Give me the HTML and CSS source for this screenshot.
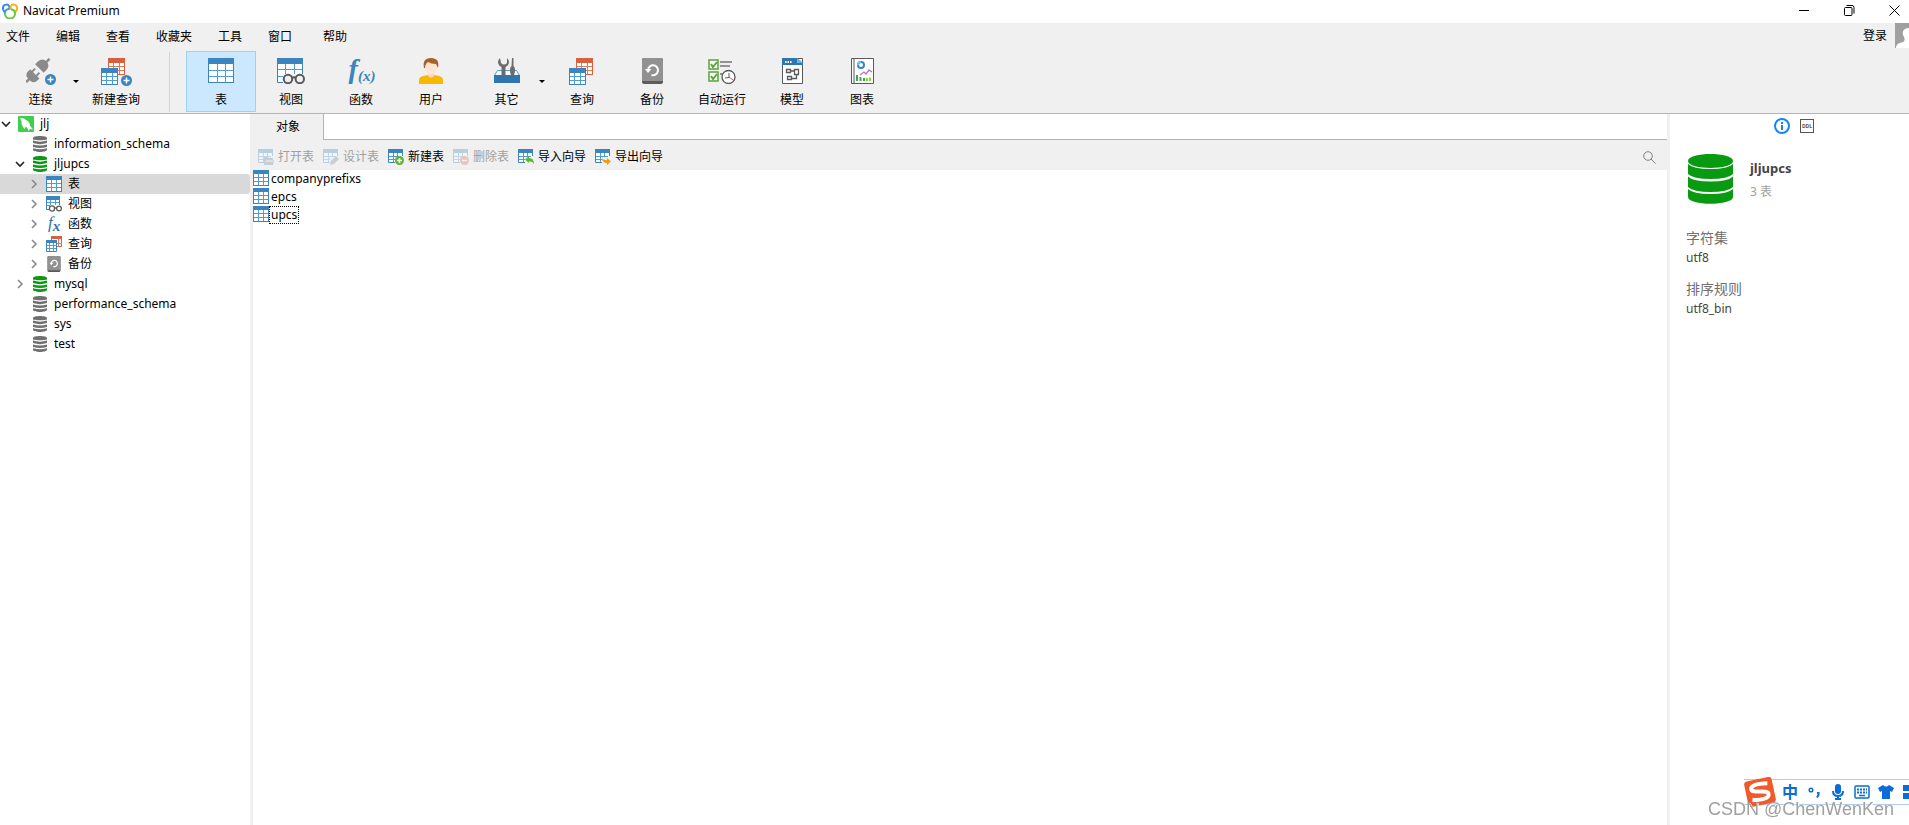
FILE: index.html
```html
<!DOCTYPE html>
<html lang="zh-CN">
<head>
    <meta charset="UTF-8">
    <meta name="viewport" content="width=device-width, initial-scale=1.0">
    <title>Navicat Premium</title>
    <link rel="stylesheet" href="styles.css">
</head>
<body>
    <!-- shared icons -->
    <svg class="defs" aria-hidden="true">
        <symbol id="grid16" viewBox="0 0 16 16">
            <rect x=".5" y=".5" width="15" height="15" fill="#fff" stroke="#3a84c0"/>
            <path d="M0 0h16v4H0z" fill="#3a84c0"/>
            <path d="M5.500 4v11M10.500 4v11M1 7.500h14M1 11.500h14" stroke="#4e9cda"/>
        </symbol>
        <symbol id="grid26" viewBox="0 0 26 26">
            <rect x=".5" y=".5" width="25" height="24" fill="#fff" stroke="#3a84c0"/>
            <path d="M0 0h26v6H0z" fill="#3a84c0"/>
            <path d="M9.500 6v18M17.500 6v18M1 12.500h24M1 18.500h24" stroke="#4e9cda"/>
        </symbol>
        <symbol id="query26" viewBox="0 0 26 27">
            <rect x="7.500" y=".5" width="16" height="16" fill="#fff" stroke="#d9603f"/>
            <path d="M7 0h17v5H7z" fill="#d9603f"/>
            <path d="M12.500 5v11M18.500 5v11M8 8.500h15M8 12.500h15" stroke="#e07a5e"/>
            <rect x=".5" y="10.500" width="16" height="16" fill="#fff" stroke="#3a84c0"/>
            <path d="M0 10h17v5H0z" fill="#3a84c0"/>
            <path d="M5.500 15v11M11.500 15v11M1 18.500h15M1 22.500h15" stroke="#4e9cda"/>
        </symbol>
        <symbol id="view26" viewBox="0 0 28 26">
            <path d="M.5 0v24.500H6M25.500 0v16" fill="#fff" stroke="#3a84c0"/>
            <path d="M1 6h24v11H7v7H1z" fill="#fff"/>
            <path d="M0 0h26v6H0z" fill="#3a84c0"/>
            <path d="M8.500 6v10M17.500 6v10M1 11.500h24M1 18.500h5" stroke="#4e9cda"/>
            <g fill="#f0f0f0" stroke="#595959" stroke-width="2"><circle cx="11" cy="21" r="4.200"/><circle cx="22.800" cy="21" r="4.200"/><path d="M15 20q2-1.500 4 0" fill="none"/></g>
        </symbol>
        <symbol id="backup" viewBox="0 0 21 26">
            <rect width="21" height="26" rx="2" fill="#5c5c5c"/>
            <path d="M2 0h17a2 2 0 0 1 2 2v21H0V2a2 2 0 0 1 2-2z" fill="#919191"/>
            <path d="M6 12a5 5 0 1 1 3.500 5" fill="none" stroke="#fff" stroke-width="2"/>
            <path d="M3 11h6.500L6 15z" fill="#fff"/>
        </symbol>
        <symbol id="db" viewBox="0 0 14 16">
            <path d="M0 2.200C0-.6 14-.6 14 2.200v1C14 4.500 0 4.500 0 3.200zM0 4.600q7 2.200 14 0v2.500Q7 9.300 0 7.100zM0 8.400q7 2.200 14 0v2.500q-7 2.200-14 0zM0 12.200q7 2.200 14 0v1.600c0 2.900-14 2.900-14 0z" fill="currentColor"/>
        </symbol>
        <symbol id="plus" viewBox="0 0 11 11">
            <circle cx="5.500" cy="5.500" r="5.500" fill="#3a84c0"/>
            <path d="M5.500 2.500v6M2.500 5.500h6" stroke="#fff" stroke-width="1.500"/>
        </symbol>
        <symbol id="action" viewBox="0 0 16 16">
            <path d="M.5 1v12.500H7M14.500 1v6" fill="none" stroke="#3a84c0"/>
            <path d="M1 4h13v4H7v5H1z" fill="#fff"/>
            <path d="M0 0h15v4H0z" fill="#3a84c0"/>
            <path d="M5.500 4v9M9.500 4v4M1 7.500h12M1 10.500h6" stroke="#4e9cda" fill="none"/>
        </symbol>
        <symbol id="right" viewBox="0 0 12 12"><path d="M4 2l4 4-4 4" fill="none" stroke="#8a8a8a" stroke-width="1.600"/></symbol>
        <symbol id="down" viewBox="0 0 12 12"><path d="M2 4l4 4 4-4" fill="none" stroke="#222" stroke-width="1.600"/></symbol>
    </svg>

    <header class="titlebar">
        <svg class="logo" viewBox="0 0 16 16" fill="none" stroke-width="2">
            <path d="M3.500 9C0 8 0 2 4 1.500 7 1 8 4 7 6.500" stroke="#4285f4"/>
            <path d="M12.500 9C16 8 16 2 12 1.500 9 1 8 4 9 6.500" stroke="#fbb416"/>
            <path d="M7 6C4 6 2.500 8.500 3 11" stroke="#2fa9c4"/>
            <path d="M3 10.500C3 17 13 17 13 10.500 13 8 11.500 6.500 9 6.500" stroke="#6cc644"/>
        </svg>
        <h1 class="title">Navicat Premium</h1>
        <div class="window-buttons">
            <button aria-label="最小化"><svg viewBox="0 0 11 11"><path d="M0 5.500h10" stroke="#000"/></svg></button>
            <button aria-label="还原"><svg viewBox="0 0 11 11" fill="none" stroke="#000"><rect x=".5" y="2.500" width="7.500" height="8" rx="1"/><path d="M2.500.5H8q2 0 2 2v6"/></svg></button>
            <button aria-label="关闭"><svg viewBox="0 0 11 11"><path d="M.5.5l10 10M10.500.5l-10 10" stroke="#000"/></svg></button>
        </div>
    </header>

    <div class="menubar">
        <nav class="menu">
            <div class="menu-group">
                <button>文件</button>
                <button>编辑</button>
                <button>查看</button>
                <button>收藏夹</button>
                <button>工具</button>
                <button>窗口</button>
            </div>
            <button>帮助</button>
        </nav>
        <button class="login">登录</button>
        <svg class="avatar" viewBox="0 0 14 25"><path d="M0 0h14v25H0z" fill="#a0a0a0"/><path d="M14 5c-5 0-7 3-6 7l1 2c1 2 1 4-1 5-5 1-7 3-7 6h13z" fill="#fff"/></svg>
    </div>

    <div class="toolbar">
        <div class="split">
            <button class="tool">
                <svg width="30" height="27" viewBox="0 0 30 27">
                    <g transform="rotate(-45 12 12)" fill="#8a8a8a"><path d="M-5 11h5v2.500h-5zM-1 10q0-3 4-4h4v2h4v2H7v4h4v2H7v3H3q-4-1-4-4zM14 6q10-1 10 6t-10 6zM23 11h5v2.500h-5z"/></g>
                    <use href="#plus" x="19" y="16" width="11" height="11"/>
                </svg>
                <span>连接</span>
            </button>
            <button class="arrow" aria-label="更多连接"></button>
        </div>
        <button class="tool">
            <svg width="31" height="28" viewBox="0 0 31 28"><use href="#query26" width="26" height="27"/><use href="#plus" x="20" y="17" width="11" height="11"/></svg>
            <span>新建查询</span>
        </button>
        <div class="separator"></div>
        <button class="tool active"><svg width="26" height="26"><use href="#grid26"/></svg><span>表</span></button>
        <button class="tool"><svg width="28" height="26"><use href="#view26"/></svg><span>视图</span></button>
        <button class="tool"><span class="fx fx-large">f<sub>(x)</sub></span><span>函数</span></button>
        <button class="tool">
            <svg width="24" height="26" viewBox="0 0 24 26">
                <path d="M0 26v-4q0-3 4-4l5-1h6l5 1q4 1 4 4v4z" fill="#f8b800"/>
                <path d="M9 13h6v5q-3 3-6 0z" fill="#fbd9c4"/>
                <path d="M6 4h12v6q-1 6-6 6t-6-6z" fill="#fde4d3"/>
                <path d="M5 10Q3 0 12 0t7 10l-2-4q-5 0-8-2-3 2-3 6z" fill="#a9602a"/>
            </svg>
            <span>用户</span>
        </button>
        <div class="split">
            <button class="tool">
                <svg width="26" height="26" viewBox="0 0 26 26">
                    <path d="M3.500 12.500h19l3 5H.5z" fill="#fff" stroke="#4e9cda"/>
                    <path d="M6 0Q3 3 4.500 6 5 8 7.500 9v8h4V9Q14 8 14.500 6 16 3 13 0v5q-3 3-6 0zM18 0h1.500v8q1.500 1 1.500 4t-1 5h-3q-1-2-1-5t1.500-4z" fill="#6c6c6c"/>
                    <path d="M0 17h26v8H0z" fill="#2f75ae"/>
                </svg>
                <span>其它</span>
            </button>
            <button class="arrow" aria-label="更多其它"></button>
        </div>
        <button class="tool"><svg width="26" height="27"><use href="#query26"/></svg><span>查询</span></button>
        <button class="tool"><svg width="21" height="26"><use href="#backup"/></svg><span>备份</span></button>
        <button class="tool">
            <svg width="28" height="26" viewBox="0 0 28 26" fill="none">
                <path d="M1 2h9v9H1zM1 14h9v9H1z" fill="#fff" stroke="#5ba33c" stroke-width="1.500"/>
                <path d="M3 6l2 3 4-5M3 18l2 3 4-5" stroke="#5ba33c" stroke-width="2"/>
                <path d="M12 4h12M12 8h10M12 16h3" stroke="#939393" stroke-width="2"/>
                <circle cx="20.500" cy="19" r="6.500" fill="#fff" stroke="#595959" stroke-width="1.300"/>
                <path d="M21 15v4.500L17 20" stroke="#595959"/><path d="M21 19l4 3" stroke="#d9603f"/>
            </svg>
            <span>自动运行</span>
        </button>
        <button class="tool">
            <svg width="21" height="26" viewBox="0 0 21 26" fill="none">
                <path d="M.5.5h20v25H.5z" fill="#fff" stroke="#595959"/>
                <path d="M0 0h15l6 5v2H0z" fill="#2f75ae"/><path d="M15 0l6 5h-6z" fill="#63b4f3"/>
                <path d="M3 4h1.500M5.500 4H7M8 4h1.500" stroke="#fff" stroke-width="2"/>
                <path d="M4.500 11.500h4v3h-4zM12.500 11.500h4v5h-4zM5.500 18.500h4v3h-4zM8.500 13h4M9.500 20.500h5v-4" stroke="#595959" stroke-width="1.300"/>
            </svg>
            <span>模型</span>
        </button>
        <button class="tool">
            <svg width="23" height="26" viewBox="0 0 23 26" fill="none">
                <path d="M.5.5h22v25H.5z" fill="#fff" stroke="#595959"/><path d="M3 1v24" stroke="#595959"/>
                <circle cx="10" cy="7" r="3" stroke="#3a84c0" stroke-width="2"/><path d="M10 4a3 3 0 0 0-3 3" stroke="#63c4f3" stroke-width="2"/>
                <path d="M9 17l4-3 2 2 3-4 3 2" stroke="#b86fc9" stroke-width="1.300"/>
                <path d="M6 17v6M9.500 19v4M13 20v3" stroke="#35ab4c" stroke-width="2"/><path d="M16 20v3M19 19.500v3.500" stroke="#8fd12a" stroke-width="2"/>
            </svg>
            <span>图表</span>
        </button>
    </div>

    <div class="workspace">
        <ul class="tree">
            <li><svg class="chevron"><use href="#down"/></svg><svg class="icon" viewBox="0 0 16 16"><rect width="16" height="16" rx="1" fill="#3fd04b"/><path d="M2 2q4-.5 6 2 4 2 4 5.500l3 4-3-.5-1.500 2q-.5-3-2.500-4.500L6.500 13Q3 9 3.500 5z" fill="#fff"/></svg>jlj</li>
            <li class="level1"><span class="chevron"></span><svg class="icon off"><use href="#db"/></svg>information_schema</li>
            <li class="level1"><svg class="chevron"><use href="#down"/></svg><svg class="icon on"><use href="#db"/></svg>jljupcs</li>
            <li class="level2 selected"><svg class="chevron"><use href="#right"/></svg><svg class="icon"><use href="#grid16"/></svg>表</li>
            <li class="level2"><svg class="chevron"><use href="#right"/></svg><svg class="icon" viewBox="0 0 16 16"><path d="M.5 1v12.500H3M13.500 1v8" stroke="#3a84c0" fill="none"/><path d="M0 0h14v4H0z" fill="#3a84c0"/><path d="M4.500 4v5M9.500 4v5M1 6.500h12M1 9.500h3" stroke="#4e9cda"/><g fill="#fff" stroke="#595959" stroke-width="1.300"><circle cx="6" cy="12.500" r="2.600"/><circle cx="13" cy="12.500" r="2.400"/><path d="M8.500 12h2"/></g></svg>视图</li>
            <li class="level2"><svg class="chevron"><use href="#right"/></svg><span class="icon fx">f<sub>x</sub></span>函数</li>
            <li class="level2"><svg class="chevron"><use href="#right"/></svg><svg class="icon" viewBox="0 0 16 16"><path d="M5.500.5h10v10h-10z" fill="#fff" stroke="#d9603f"/><path d="M5 0h11v3H5z" fill="#d9603f"/><path d="M12.500 3v8M9 7.500h7" stroke="#e07a5e"/><path d="M.5 4.500h10v11H.5z" fill="#fff" stroke="#3a84c0"/><path d="M0 4h11v3H0z" fill="#3a84c0"/><path d="M3.500 7v8M7.500 7v8M1 9.500h9M1 12.500h9" stroke="#4e9cda"/></svg>查询</li>
            <li class="level2"><svg class="chevron"><use href="#right"/></svg><svg class="icon"><use href="#backup"/></svg>备份</li>
            <li class="level1"><svg class="chevron"><use href="#right"/></svg><svg class="icon on"><use href="#db"/></svg>mysql</li>
            <li class="level1"><span class="chevron"></span><svg class="icon off"><use href="#db"/></svg>performance_schema</li>
            <li class="level1"><span class="chevron"></span><svg class="icon off"><use href="#db"/></svg>sys</li>
            <li class="level1"><span class="chevron"></span><svg class="icon off"><use href="#db"/></svg>test</li>
        </ul>

        <main class="content">
            <div class="tabs"><button class="tab">对象</button><div class="tab-space"></div></div>
            <div class="actions">
                <button disabled><svg class="icon" viewBox="0 0 16 16"><use href="#action" width="16" height="16"/><path d="M6 8h4l1 1h4v2h1l-1 5H6z" fill="#6d8292"/><path d="M8 12h7" stroke="#fff"/></svg>打开表</button>
                <button disabled><svg class="icon" viewBox="0 0 16 16"><use href="#action" width="16" height="16"/><path d="M7 16l1-4 5-5 3 3-5 5z" fill="#6d8292"/></svg>设计表</button>
                <button><svg class="icon" viewBox="0 0 16 16"><use href="#action" width="16" height="16"/><circle cx="11.500" cy="11.500" r="4.500" fill="#5eb62c"/><path d="M11.500 9v5M9 11.500h5" stroke="#fff" stroke-width="1.500"/></svg>新建表</button>
                <button disabled><svg class="icon" viewBox="0 0 16 16"><use href="#action" width="16" height="16"/><circle cx="11.500" cy="11.500" r="4.500" fill="#d9603f"/><path d="M9 11.500h5" stroke="#fff" stroke-width="1.500"/></svg>删除表</button>
                <button><svg class="icon" viewBox="0 0 16 16"><use href="#action" width="16" height="16"/><path d="M7 10.500L11 7v2q5 0 5 6-1-3-5-2.500V14z" fill="#5eb62c"/></svg>导入向导</button>
                <button><svg class="icon" viewBox="0 0 16 16"><use href="#action" width="16" height="16"/><path d="M16 12.500L12 16v-2q-5 0-5-5 1 2 5 2V9z" fill="#f89a10"/></svg>导出向导</button>
                <button class="search" aria-label="搜索"><svg viewBox="0 0 13 13" fill="none" stroke="#808080"><circle cx="5" cy="5" r="4.300"/><path d="M8 8l4.500 4.500"/></svg></button>
            </div>
            <ul class="objects">
                <li><svg class="icon"><use href="#grid16"/></svg><span>companyprefixs</span></li>
                <li><svg class="icon"><use href="#grid16"/></svg><span>epcs</span></li>
                <li><svg class="icon"><use href="#grid16"/></svg><span class="focused">upcs</span></li>
            </ul>
        </main>

        <aside class="info">
            <div class="info-tabs">
                <button aria-label="常规"><svg width="16" height="16" viewBox="0 0 16 16" fill="none" stroke="#1683fb" stroke-width="2"><circle cx="8" cy="8" r="7"/><path d="M8 7v5M8 4v2"/></svg></button>
                <button class="ddl">DDL</button>
            </div>
            <div class="summary">
                <svg class="on" width="45" height="50" viewBox="0 0 45 50"><path d="M0 7C0-2.300 45-2.300 45 7S0 16.300 0 7zM0 10q5 5 22.500 5T45 10v10q-5 5-22.500 5T0 20zM0 22.500q5 5 22.500 5t22.500-5V33q-5 5-22.500 5T0 33zM0 35q5 5 22.500 5T45 35v8c0 9-45 9-45 0z" fill="currentColor"/></svg>
                <div>
                    <h2>jljupcs</h2>
                    <p>3 表</p>
                </div>
            </div>
            <dl>
                <dt>字符集</dt><dd>utf8</dd>
                <dt>排序规则</dt><dd>utf8_bin</dd>
            </dl>
        </aside>
    </div>

    <!-- input method bar floating over the window -->
    <div class="ime">
        <svg class="sogou" viewBox="0 0 32 30"><g transform="rotate(-12 16 15)"><rect x="2" y="2" width="28" height="26" rx="3" fill="#f1592a"/><path d="M25 8Q8 5 8 10.500c0 5 16 3 16 8 0 5-10 5-17 2.500" fill="none" stroke="#fff" stroke-width="4"/></g></svg>
        <span class="key lang">中</span>
        <svg class="key" viewBox="0 0 16 16" fill="none" stroke="#0a6cd6" stroke-width="1.500"><circle cx="5" cy="6" r="1.800"/><path d="M11 9h1.500v2L11 13.500" stroke-width="2"/></svg>
        <svg class="key" viewBox="0 0 16 16" fill="none" stroke="#0a6cd6" stroke-width="2"><rect x="5" y="0" width="6" height="10" rx="3" fill="#0a6cd6" stroke="none"/><path d="M3 7q0 5 5 5t5-5M8 12v3M5 15h6"/></svg>
        <svg class="key" viewBox="0 0 16 16"><rect x="1" y="2" width="14" height="12" rx="1" fill="#fff" stroke="#0a6cd6" stroke-width="1.500"/><path d="M3 5.500h10M3 8.500h10" stroke="#0a6cd6" stroke-width="2" stroke-dasharray="2 1"/><path d="M5 11.500h6" stroke="#0a6cd6" stroke-width="1.500"/></svg>
        <svg class="key" viewBox="0 0 16 16"><path d="M5 1q3 3 6 0l5 3-2 4-2-1v8H4V7L2 8 0 4z" fill="#0a6cd6"/></svg>
        <svg class="key" viewBox="0 0 16 16"><path d="M1 1h6v6H1zM9 1h6v6H9zM1 9h6v6H1zM9 9h6v6H9z" fill="#0a6cd6"/></svg>
    </div>
    <div class="watermark">CSDN @ChenWenKen</div>
</body>
</html>
```
FILE: styles.css
```css
* {
    box-sizing: border-box;
}
body {
    display: flex;
    flex-direction: column;
    height: 100vh;
    margin: 0;
    overflow: hidden;
    background: #fff;
    color: #000;
    font-family: "Noto Sans", "Noto Sans CJK SC", sans-serif;
    font-size: 12px;
    line-height: 16px;
}
button {
    padding: 0;
    border: none;
    background: none;
    color: inherit;
    font: inherit;
    white-space: nowrap;
}
ul, dl, dd, h1, h2, p {
    margin: 0;
    padding: 0;
    list-style: none;
}
svg {
    display: block;
    flex-shrink: 0;
}
.defs {
    display: none;
}
.icon {
    width: 16px;
    height: 16px;
}
.on {
    color: #0a9a12;
}
.off {
    color: #707070;
}
.fx {
    padding-left: 2px;
    color: #2f75ae;
    font-family: "Liberation Serif", serif;
    font-size: 17px;
    font-style: italic;
    line-height: 14px;
    white-space: nowrap;
}
.fx sub {
    font-size: 15px;
    font-weight: bold;
    line-height: 0;
    vertical-align: -3px;
}
.fx-large {
    height: 26px;
    color: #3a84c0;
    font-size: 28px;
    font-weight: bold;
    line-height: 22px;
}

/* title and menu */
.titlebar {
    display: flex;
    align-items: center;
    height: 23px;
    padding: 0 1px 2px 2px;
}
.logo {
    width: 16px;
    height: 16px;
}
.title {
    flex: 1;
    padding: 1px 0 0 5px;
    font-size: 12px;
    font-weight: normal;
}
.window-buttons {
    display: flex;
}
.window-buttons button {
    display: flex;
    justify-content: flex-end;
    width: 45px;
    padding-right: 8px;
}
.window-buttons svg {
    width: 11px;
    height: 11px;
}
.menubar {
    display: flex;
    align-items: flex-start;
    height: 26px;
    padding-left: 6px;
    background: #f0f0f0;
}
.menu {
    display: flex;
    flex: 1;
    gap: 31px;
    padding-top: 6px;
}
.menu-group {
    display: flex;
    gap: 26px;
}
.login {
    margin-right: 8px;
    padding-top: 5px;
}
.avatar {
    width: 14px;
    height: 25px;
}

/* main toolbar */
.toolbar {
    display: flex;
    height: 65px;
    padding: 2px 0 1px;
    border-bottom: 1px solid #b4b4b4;
    background: #f0f0f0;
}
.tool {
    display: flex;
    flex-direction: column;
    align-items: center;
    justify-content: space-between;
    width: 70px;
    padding: 7px 0 4px;
}
.tool.active {
    background: #cce8ff;
    border: 1px solid #99d1ff;
    padding: 6px 0 3px;
}
.split {
    display: flex;
}
.split .tool {
    padding-left: 11px;
}
.arrow {
    width: 11px;
}
.arrow::after {
    content: "";
    display: block;
    margin: 0 auto;
    width: 0;
    border: 3px solid transparent;
    border-top-color: #000;
    border-bottom: none;
}
.separator {
    width: 1px;
    margin: 1px 16px 0 18px;
    background: #d4d4d4;
}

/* connection tree */
.workspace {
    display: flex;
    flex: 1;
    min-height: 0;
}
.tree {
    width: 253px;
    border-right: 3px solid #f0f0f0;
}
.tree li {
    display: flex;
    align-items: center;
    height: 20px;
}
.tree .icon {
    margin: 0 6px;
}
.tree .level1 {
    padding-left: 14px;
}
.tree .level2 {
    padding-left: 28px;
}
.tree .selected {
    background: #d9d9d9;
    border-radius: 0 3px 3px 0;
}
.chevron {
    width: 12px;
    height: 12px;
}

/* object list */
.content {
    flex: 1;
}
.tabs {
    display: flex;
    height: 26px;
    background: #f0f0f0;
}
.tab {
    width: 70px;
}
.tab-space {
    flex: 1;
    border-left: 1px solid #b4b4b4;
    border-bottom: 1px solid #b4b4b4;
    background: #fff;
}
.actions {
    display: flex;
    align-items: center;
    gap: 9px;
    height: 30px;
    padding: 4px 11px 0 5px;
    background: #f0f0f0;
}
.actions button {
    display: flex;
    align-items: center;
    gap: 4px;
}
.actions button:disabled {
    color: #a0a0a0;
}
.actions button:disabled svg {
    opacity: .3;
}
.actions .search {
    margin-left: auto;
}
.search svg {
    width: 13px;
    height: 13px;
}
.objects li {
    display: flex;
    height: 18px;
}
.objects span {
    height: 18px;
    padding: 0 1px;
    border: 1px solid transparent;
}
.objects .focused {
    border: 1px dotted #000;
}

/* information pane */
.info {
    width: 242px;
    padding: 4px 0 0 16px;
    border-left: 3px solid #f0f0f0;
}
.info-tabs {
    display: flex;
    align-items: center;
    gap: 10px;
    padding-left: 88px;
}
.ddl {
    width: 14px;
    height: 14px;
    border: 1px solid #555;
    color: #555;
    font-size: 5px;
    font-weight: bold;
    line-height: 12px;
}
.summary {
    display: flex;
    gap: 17px;
    padding: 20px 2px 0;
}
.summary h2 {
    padding: 6px 0 8px;
    color: #444;
    font-size: 13px;
}
.summary p {
    color: #a0a0a0;
}
.info dl {
    padding-top: 24px;
}
.info dt {
    color: #707070;
    font-size: 14px;
    line-height: 20px;
}
.info dd {
    padding: 2px 0 13px;
    color: #444;
}

.ime {
    position: fixed;
    right: -10px;
    bottom: 20px;
    display: flex;
    align-items: center;
    gap: 8px;
    height: 26px;
    border: 1px solid #b5cdec;
    border-left: none;
    background: #fff;
}
.sogou {
    width: 32px;
    height: 30px;
    margin-right: -2px;
}
.key {
    width: 16px;
    height: 16px;
}
.lang {
    color: #0a6cd6;
    font-size: 16px;
    font-weight: bold;
}
.watermark {
    position: fixed;
    right: 15px;
    bottom: 5px;
    color: #a0a0a0;
    font-family: "Liberation Sans", sans-serif;
    font-size: 18px;
    line-height: 22px;
    text-shadow: 1px 1px 0 #fff;
}
```
